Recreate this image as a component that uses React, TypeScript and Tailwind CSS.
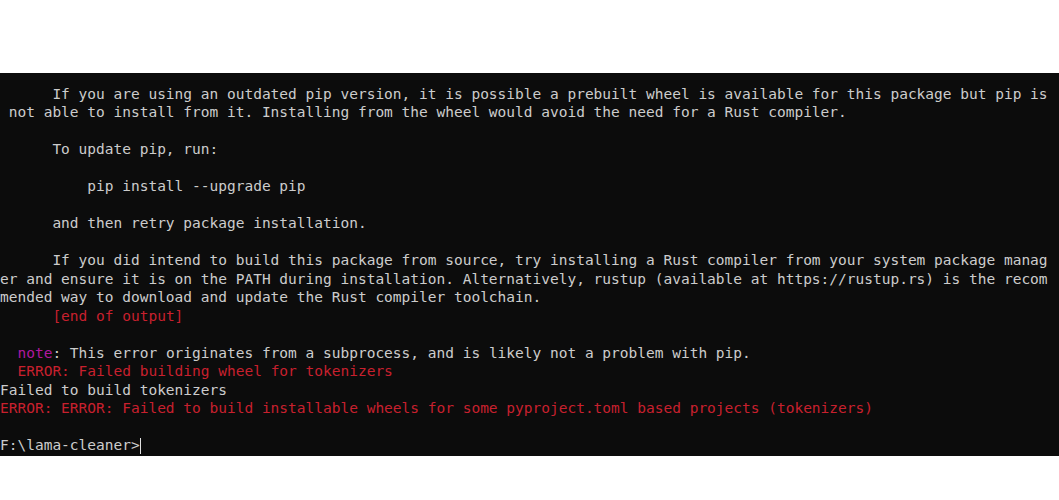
type Seg = { t: string; c?: "red" | "note" };
type Row = Seg[];

const rows: Row[] = [
  [{ t: "      If you are using an outdated pip version, it is possible a prebuilt wheel is available for this package but pip is" }],
  [{ t: " not able to install from it. Installing from the wheel would avoid the need for a Rust compiler." }],
  [],
  [{ t: "      To update pip, run:" }],
  [],
  [{ t: "          pip install --upgrade pip" }],
  [],
  [{ t: "      and then retry package installation." }],
  [],
  [{ t: "      If you did intend to build this package from source, try installing a Rust compiler from your system package manag" }],
  [{ t: "er and ensure it is on the PATH during installation. Alternatively, rustup (available at https://rustup.rs) is the recom" }],
  [{ t: "mended way to download and update the Rust compiler toolchain." }],
  [{ t: "      " }, { t: "[end of output]", c: "red" }],
  [],
  [{ t: "  " }, { t: "note", c: "note" }, { t: ": This error originates from a subprocess, and is likely not a problem with pip." }],
  [{ t: "  " }, { t: "ERROR: Failed building wheel for tokenizers", c: "red" }],
  [{ t: "Failed to build tokenizers" }],
  [{ t: "ERROR: ERROR: Failed to build installable wheels for some pyproject.toml based projects (tokenizers)", c: "red" }],
  [],
];

function segClass(c?: "red" | "note") {
  if (c === "red") return "text-[#c8202e]";
  if (c === "note") return "text-[#b0189f]";
  return "";
}

export default function App() {
  return (
    <div className="w-[1059px] h-[500px] bg-white flex flex-col overflow-hidden">
      <div className="h-[73px] shrink-0 bg-white" />
      <div
        className="h-[383px] shrink-0 bg-[#0c0c0c] pt-[11.5px] text-[#cccccc] text-[14.5px] leading-[18.53px] whitespace-pre overflow-hidden"
        style={{ fontFamily: '"DejaVu Sans Mono", "Liberation Mono", monospace' }}
      >
        {rows.map((row, i) => (
          <div key={i} className="h-[18.53px]">
            {row.map((s, j) => (
              <span key={j} className={segClass(s.c)}>
                {s.t}
              </span>
            ))}
          </div>
        ))}
        {/* prompt + cursor */}
        <div className="h-[18.53px] flex items-center">
          <span>F:\lama-cleaner&gt;</span>
          <span className="w-[1.5px] h-[16px] bg-[#e0e0e0]" />
        </div>
      </div>
      <div className="flex-1 bg-white" />
    </div>
  );
}
